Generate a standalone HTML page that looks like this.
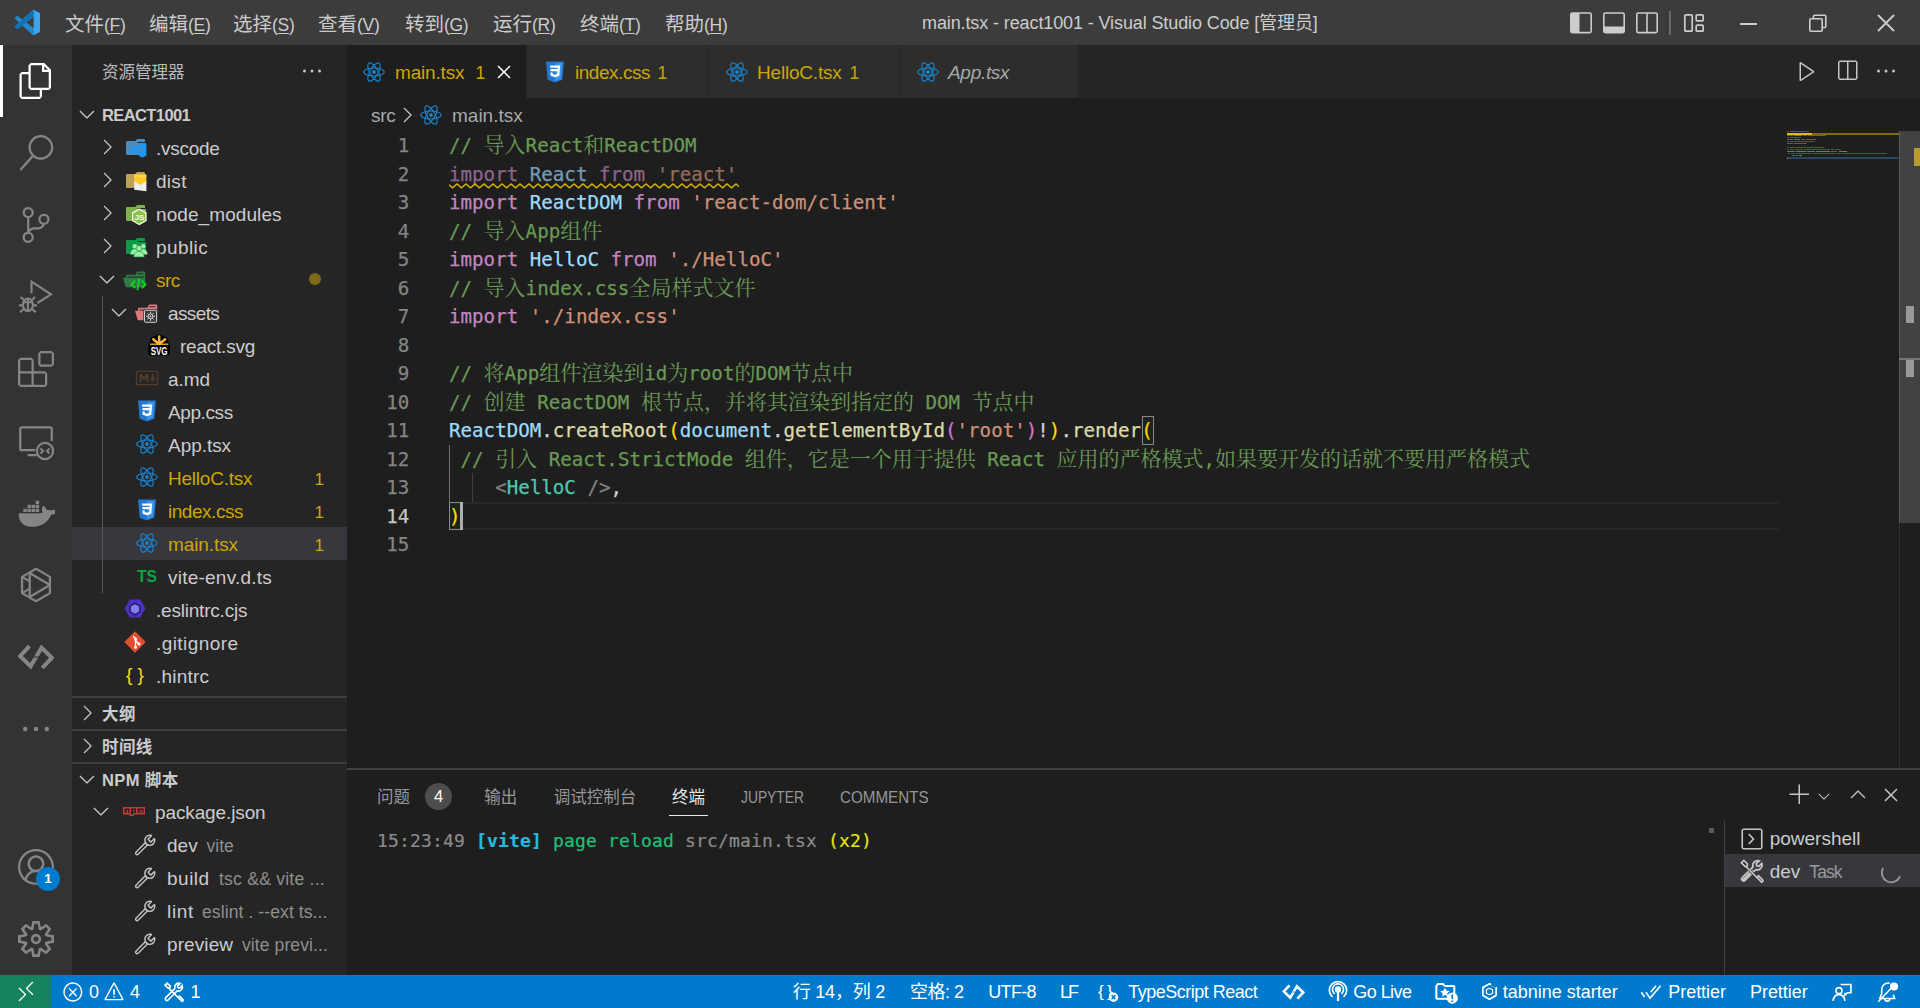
<!DOCTYPE html>
<html lang="zh-CN">
<head>
<meta charset="utf-8">
<title>main.tsx - react1001 - Visual Studio Code</title>
<style>
*{box-sizing:border-box;margin:0;padding:0}
html,body{width:1920px;height:1008px;overflow:hidden;background:#1e1e1e}
body{font-family:"Liberation Sans","Noto Sans CJK SC",sans-serif;font-size:19px;color:#ccc;position:relative}
.abs{position:absolute}
svg{display:block;position:absolute}
/* title bar */
#title{position:absolute;left:0;top:0;width:1920px;height:45px;background:#3c3c3c;color:#ccc}
#title .mi{position:absolute;top:1.5px;height:45px;line-height:44px;font-size:19.5px;white-space:nowrap}
#title .mi .la{font-size:17.5px;letter-spacing:-.3px}
#title .mi u{text-decoration-thickness:1px;text-underline-offset:2px}
#wtitle{position:absolute;top:1.2px;left:922px;height:45px;line-height:44px;font-size:18px;letter-spacing:-.11px;white-space:nowrap;color:#ccc}
/* activity bar */
#act{position:absolute;left:0;top:45px;width:72px;height:930px;background:#333}
/* side bar */
#side{position:absolute;left:72px;top:45px;width:275px;height:930px;background:#252526;overflow:hidden}
.row{position:absolute;left:0;width:275px;height:33px;line-height:32px;white-space:nowrap;font-size:19px;color:#ccc}
.row .lb{position:absolute;top:2.2px}
.row .bd{position:absolute;top:3px;right:23px;font-size:17px}
.warn{color:#cca700}
.hdr{position:absolute;left:0;width:275px;height:33px;line-height:32px;font-weight:bold;font-size:16.5px;color:#ccc;white-space:nowrap}
.hdr .lb{position:absolute;left:30px;top:1px}
.dim{color:#8f8f8f}
/* editor */
#tabs{position:absolute;left:347px;top:45px;width:1573px;height:53px;background:#252526}
.tab{position:absolute;top:0;height:53px;background:#2d2d2d;border-right:1px solid #252526;line-height:52px;font-size:19px;white-space:nowrap}
.tab.act{background:#1e1e1e}
.tab .lb{position:absolute;top:2.1px}
#crumbs{position:absolute;left:347px;top:98px;width:1573px;height:33px;background:#1e1e1e;line-height:32px;font-size:19px;color:#a9a9a9;white-space:nowrap}
#ed{position:absolute;left:347px;top:131px;width:1573px;height:637px;background:#1e1e1e;overflow:hidden}
.ln{-webkit-text-stroke:.25px;position:absolute;left:0;margin-top:1.1px;width:62.4px;text-align:right;height:28.5px;line-height:28.5px;font-family:"DejaVu Sans Mono","Liberation Mono",monospace;font-size:19.17px;color:#858585}
.cl{-webkit-text-stroke:.25px;position:absolute;left:102px;margin-top:1.1px;height:28.5px;line-height:28.5px;font-family:"DejaVu Sans Mono","Liberation Mono","Noto Serif CJK SC",monospace;font-size:19.17px;color:#d4d4d4;white-space:pre}
.cl .z{-webkit-text-stroke:0;font-family:"Noto Serif CJK SC","Noto Sans CJK SC",serif;font-size:21px;line-height:20px}
.c{color:#6a9955}.k{color:#c586c0}.v{color:#9cdcfe}.s{color:#ce9178}.f{color:#dcdcaa}.b1{color:#ffd700}.b2{color:#da70d6}.b3{color:#179fff}.t{color:#4ec9b0}.g{color:#808080}
/* panel */
#panel{position:absolute;left:347px;top:768px;width:1573px;height:207px;background:#1e1e1e;border-top:2px solid #414141}
.pt{position:absolute;top:9.3px;height:36px;line-height:36px;font-size:16.5px;color:#979797;white-space:nowrap}
.term{-webkit-text-stroke:.2px;font-family:"DejaVu Sans Mono","Liberation Mono",monospace;font-size:18px;letter-spacing:0.16px;white-space:pre}
/* status */
#status{position:absolute;left:0;top:975px;width:1920px;height:33px;background:#007acc;color:#fff;font-size:18px;line-height:32px}
#status .si{position:absolute;top:1.2px;height:33px;white-space:nowrap}
</style>
</head>
<body>
<div id="title">
<svg style="left:15px;top:10px" width="25" height="25" viewBox="0 0 100 100"><path fill="#2489ca" d="M96.5 10.8L75.9 0.9a6.2 6.2 0 0 0-7.1 1.2L29.4 38 12.2 25a4.2 4.2 0 0 0-5.3.2L1.4 30.200000000000003a4.2 4.2 0 0 0 0 6.2L16.3 50 1.4 63.6a4.2 4.2 0 0 0 0 6.2l5.5 5a4.2 4.2 0 0 0 5.3.2L29.4 62l39.4 35.9a6.2 6.2 0 0 0 7.1 1.2l20.6-9.9a6.2 6.2 0 0 0 3.5-5.6V16.4a6.2 6.2 0 0 0-3.5-5.6z"/><path fill="#1070b3" d="M96.5 10.8L75.9.9a6.2 6.2 0 0 0-7.1 1.2L1.4 63.6a4.2 4.2 0 0 0 0 6.2l5.500 5a4.200 4.200 0 0 0 5.300.200L93.400 13.400c2.700-2.100 6.600-.100 6.600 3.300v-.300a6.200 6.200 0 0 0-3.500-5.600z" opacity=".9"/><path fill="#3c3c3c" d="M75 27.300L45.100 50 75 72.700z"/><path fill="#3aa6f0" d="M75 .3c-1.500-.400-4.300.200-6.200 1.800 2.300-2.300 6.200-.700 6.200 2.600v90.600c0 3.300-3.900 4.900-6.200 2.600 1.900 1.600 4.700 2.200 6.200 1.800l21.500-10.500a6.200 6.200 0 0 0 3.500-5.600V16.400a6.200 6.200 0 0 0-3.500-5.600z"/></svg>
<div class="mi" style="left:65px">文件<span class="la">(<u>F</u>)</span></div>
<div class="mi" style="left:149px">编辑<span class="la">(<u>E</u>)</span></div>
<div class="mi" style="left:233px">选择<span class="la">(<u>S</u>)</span></div>
<div class="mi" style="left:318px">查看<span class="la">(<u>V</u>)</span></div>
<div class="mi" style="left:405px">转到<span class="la">(<u>G</u>)</span></div>
<div class="mi" style="left:493px">运行<span class="la">(<u>R</u>)</span></div>
<div class="mi" style="left:580px">终端<span class="la">(<u>T</u>)</span></div>
<div class="mi" style="left:665px">帮助<span class="la">(<u>H</u>)</span></div>
<div id="wtitle">main.tsx - react1001 - Visual Studio Code [管理员]</div>
<!-- layout controls -->
<svg style="left:1569px;top:11px" width="24" height="24" viewBox="0 0 24 24" fill="none" stroke="#ccc" stroke-width="1.6"><rect x="1.8" y="2" width="20.4" height="19.6" rx="1.5"/><path d="M1.8 3.5a1.500 1.500 0 0 1 1.500-1.500h7.200v19.600h-7.200a1.500 1.500 0 0 1-1.500-1.500z" fill="#ccc" stroke="none"/></svg>
<svg style="left:1602px;top:11px" width="24" height="24" viewBox="0 0 24 24" fill="none" stroke="#ccc" stroke-width="1.6"><rect x="1.800" y="2" width="20.400" height="19.600" rx="1.500"/><path d="M1.800 15.500h20.400v4.600a1.500 1.500 0 0 1-1.500 1.500h-17.400a1.500 1.500 0 0 1-1.500-1.500z" fill="#ccc" stroke="none"/></svg>
<svg style="left:1635px;top:11px" width="24" height="24" viewBox="0 0 24 24" fill="none" stroke="#ccc" stroke-width="1.600"><rect x="1.800" y="2" width="20.400" height="19.600" rx="1.500"/><path d="M12 2v19.600"/></svg>
<div class="abs" style="left:1669px;top:11px;width:2px;height:24px;background:#6a6a6a"></div>
<svg style="left:1683px;top:12px" width="22" height="22" viewBox="0 0 22 22" fill="none" stroke="#ccc" stroke-width="1.700"><rect x="1.800" y="2.800" width="7.400" height="16.400" rx="1"/><rect x="13.200" y="2.800" width="7" height="6" rx="1"/><rect x="13.200" y="13.200" width="7" height="6" rx="1"/></svg>
<div class="abs" style="left:1740px;top:23px;width:17px;height:2px;background:#ccc"></div>
<svg style="left:1808px;top:13px" width="20" height="20" viewBox="0 0 20 20" fill="none" stroke="#ccc" stroke-width="1.600"><rect x="1.800" y="5.800" width="12.400" height="12.400" rx="1"/><path d="M5.500 5.500V3.200a1 1 0 0 1 1-1h10.300a1 1 0 0 1 1 1v10.300a1 1 0 0 1-1 1h-2.300"/></svg>
<svg style="left:1876px;top:13px" width="20" height="20" viewBox="0 0 20 20" fill="none" stroke="#ccc" stroke-width="1.800"><path d="M2 2l16 16M18 2L2 18"/></svg>
</div>

<div id="act">
<div class="abs" style="left:0;top:0;width:3px;height:72px;background:#fff"></div>
<!-- files -->
<svg style="left:18px;top:18px" width="36" height="36" viewBox="0 0 24 24"><path fill="#fff" d="M17.500 0h-9L7 1.500V6H2.500L1 7.500v15.070L2.500 24h12.070L16 22.570V18h4.700l1.300-1.430V4.500L17.500 0zm0 2.120l2.380 2.380H17.500V2.120zm-3 20.380h-12v-15H7v9.070L8.500 18h6v4.500zm6-6h-12v-15H16V6h4.500v10.500z"/></svg>
<!-- search -->
<svg style="left:18px;top:90px" width="36" height="36" viewBox="0 0 24 24"><path fill="#858585" d="M15.250 0a8.250 8.250 0 0 0-6.180 13.720L1 22.880l1.120 1 8.050-9.120A8.251 8.251 0 1 0 15.250.010V0zm0 15a6.750 6.750 0 1 1 0-13.500 6.750 6.750 0 0 1 0 13.500z"/></svg>
<!-- scm -->
<svg style="left:18px;top:162px" width="36" height="36" viewBox="0 0 24 24"><path fill="#858585" d="M21.007 8.222A3.738 3.738 0 0 0 15.045 5.200a3.737 3.737 0 0 0 1.156 6.583 2.988 2.988 0 0 1-2.668 1.670h-2.990a4.456 4.456 0 0 0-2.989 1.165V7.400a3.737 3.737 0 1 0-1.494 0v9.117a3.776 3.776 0 1 0 1.816.099 2.990 2.990 0 0 1 2.668-1.667h2.990a4.484 4.484 0 0 0 4.223-3.039 3.736 3.736 0 0 0 3.250-3.687zM4.565 3.738a2.242 2.242 0 1 1 4.484 0 2.242 2.242 0 0 1-4.484 0zm4.484 16.441a2.242 2.242 0 1 1-4.484 0 2.242 2.242 0 0 1 4.484 0zm8.221-9.715a2.242 2.242 0 1 1 0-4.485 2.242 2.242 0 0 1 0 4.485z"/></svg>
<!-- debug -->
<svg style="left:18px;top:234px" width="36" height="36" viewBox="0 0 24 24" fill="none" stroke="#858585" stroke-width="1.400"><path d="M9 9.500V1.800l13 8.400-9 5.800"/><ellipse cx="6.600" cy="17.200" rx="3.300" ry="4.200"/><path d="M3.500 15.500H10M6.600 13v8.400M3.300 17.600H.600M3.600 20.200l-2.200 2M9.900 17.600h2.700M9.600 20.200l2.200 2M4 14L1.800 12M9.200 14l2.200-2"/></svg>
<!-- extensions -->
<svg style="left:18px;top:306px" width="36" height="36" viewBox="0 0 24 24"><path fill="#858585" d="M13.500 1.500L15 0h7.500L24 1.500V9l-1.500 1.500H15L13.500 9V1.500zm1.500 0V9h7.500V1.500H15zM0 15V6l1.500-1.500H9L10.500 6v7.500H18l1.500 1.500v7.500L18 24H1.500L0 22.500V15zm9-1.500V6H1.500v7.500H9zM9 15H1.500v7.500H9V15zm1.500 7.500H18V15h-7.500v7.500z"/></svg>
<!-- remote explorer -->
<svg style="left:18px;top:380px" width="36" height="36" viewBox="0 0 24 24" fill="none" stroke="#858585" stroke-width="1.500"><path d="M11.500 16.800H2.500a1 1 0 0 1-1-1V2.500a1 1 0 0 1 1-1h19a1 1 0 0 1 1 1v8.200M6.500 20h6"/><circle cx="18" cy="17.300" r="5.400"/><path stroke-width="1.300" d="M15 15.600l1.700 1.700-1.700 1.700M21 15.600l-1.700 1.700 1.700 1.700"/></svg>
<!-- docker -->
<svg style="left:17px;top:449px" width="38" height="38" viewBox="0 0 24 24"><path fill="#858585" d="M21.200 10.400c-.500-.400-1.700-.500-2.600-.300-.100-.900-.600-1.700-1.500-2.400l-.500-.300-.300.500c-.700 1-.800 2.700-.100 3.800-.300.200-1 .400-1.800.400H1.200c-.300 1.900.2 4.400 1.700 6.100 1.400 1.700 3.500 2.500 6.300 2.500 6 0 10.400-2.800 12.500-7.800.800 0 2.600 0 3.500-1.700l.300-.600-.400-.300c-.700-.400-2.400-.600-3.400-.100zM4 9.300h2.200v2H4zm2.600 0h2.200v2H6.600zm2.600 0h2.200v2H9.200zm2.600 0H14v2h-2.200zM6.600 6.800h2.200v2H6.600zm2.600 0h2.200v2H9.200zm2.600 0H14v2h-2.200zm0-2.500H14v2h-2.200z"/></svg>
<!-- hexagon play -->
<svg style="left:18px;top:522px" width="36" height="36" viewBox="0 0 24 24" fill="none" stroke="#858585" stroke-width="1.500" stroke-linejoin="round"><path d="M12 1.200l9.300 5.400v10.800L12 22.800l-9.300-5.400V6.600z"/><path d="M7.800 4v16M7.800 4l13.500 8-13.500 8M2.700 6.600l5.100 3M2.700 17.400l5.100-3"/></svg>
<!-- code link -->
<svg style="left:18px;top:594px" width="36" height="36" viewBox="0 0 24 24" fill="none" stroke="#858585" stroke-width="2.700" stroke-linejoin="miter"><path d="M7.600 4.700L1.400 11.400l7 6.800 7.300-12.400 6.900 6.700-6.400 6.700"/><path stroke="#333" stroke-width=".700" d="M9 12h6.400"/></svg>
<!-- ellipsis -->
<svg style="left:18px;top:666px" width="36" height="36" viewBox="0 0 24 24" fill="#858585"><circle cx="4.800" cy="12" r="1.500"/><circle cx="12" cy="12" r="1.500"/><circle cx="19.200" cy="12" r="1.500"/></svg>
<!-- account -->
<svg style="left:18px;top:804px" width="36" height="36" viewBox="0 0 16 16"><path fill="#858585" d="M16 7.992C16 3.580 12.416 0 8 0S0 3.580 0 7.992c0 2.430 1.104 4.620 2.832 6.090.016.016.032.016.032.032.144.112.288.224.448.336.080.048.144.111.224.175A7.980 7.980 0 0 0 8.016 16a7.980 7.980 0 0 0 4.480-1.375c.080-.048.144-.111.224-.160.144-.111.304-.223.448-.335.016-.016.032-.016.032-.032 1.696-1.487 2.800-3.676 2.800-6.106zm-8 7.001c-1.504 0-2.880-.480-4.016-1.279.016-.128.048-.255.080-.383a4.170 4.170 0 0 1 .416-.991c.176-.304.384-.576.640-.816.240-.240.528-.463.816-.639.304-.176.624-.304.976-.400A4.150 4.150 0 0 1 8 10.342a4.185 4.185 0 0 1 2.928 1.166c.368.368.656.800.864 1.295.112.288.192.592.240.911A7.030 7.030 0 0 1 8 14.993zm-2.448-7.400a2.490 2.490 0 0 1-.208-1.024c0-.351.064-.703.208-1.023.144-.320.336-.607.576-.847.240-.240.528-.431.848-.575.320-.144.672-.208 1.024-.208.368 0 .704.064 1.024.208.320.144.608.336.848.575.240.240.432.528.576.847.144.320.208.672.208 1.023 0 .368-.064.704-.208 1.023a2.840 2.840 0 0 1-.576.848 2.840 2.840 0 0 1-.848.575 2.715 2.715 0 0 1-2.064 0 2.840 2.840 0 0 1-.848-.575 2.526 2.526 0 0 1-.560-.848zm7.424 5.306c0-.032-.016-.048-.016-.080a5.220 5.220 0 0 0-.688-1.406 4.883 4.883 0 0 0-1.088-1.135 5.207 5.207 0 0 0-1.040-.608 2.820 2.820 0 0 0 .464-.383 4.200 4.200 0 0 0 .624-.784 3.624 3.624 0 0 0 .528-1.934 3.710 3.710 0 0 0-.288-1.470 3.799 3.799 0 0 0-.816-1.199 3.845 3.845 0 0 0-1.200-.800 3.720 3.720 0 0 0-1.472-.287 3.720 3.720 0 0 0-1.472.288 3.631 3.631 0 0 0-1.200.815 3.840 3.840 0 0 0-.800 1.199 3.710 3.710 0 0 0-.288 1.470c0 .352.048.688.144 1.007.096.336.224.640.400.927.160.288.384.544.624.784.144.144.304.271.480.383a5.120 5.120 0 0 0-1.040.624c-.416.320-.784.703-1.088 1.119a4.999 4.999 0 0 0-.688 1.406c-.016.032-.016.064-.016.080C1.776 11.636.992 9.910.992 7.992.992 4.140 4.144.991 8 .991s7.008 3.149 7.008 7.001a6.960 6.960 0 0 1-2.032 4.907z"/></svg>
<div class="abs" style="left:36px;top:822px;width:24px;height:24px;border-radius:12px;background:#007acc;color:#fff;font-size:13.500px;font-weight:bold;line-height:24px;text-align:center">1</div>
<!-- gear -->
<svg style="left:18px;top:876px" width="36" height="36" viewBox="0 0 24 24"><path fill="#858585" fill-rule="evenodd" d="M19.850 8.750l4.150.830v4.840l-4.150.830 2.350 3.520-3.430 3.430-3.520-2.350-.830 4.150H9.580l-.830-4.150-3.520 2.350-3.430-3.430 2.350-3.520L0 14.420V9.580l4.150-.830L1.800 5.230 5.230 1.800l3.520 2.350L9.580 0h4.840l.830 4.150 3.520-2.350 3.430 3.430-2.350 3.520zm-1.570 5.070l4-.810v-2l-4-.810-.540-1.300 2.290-3.430-1.430-1.430-3.430 2.290-1.300-.540-.810-4h-2l-.810 4-1.300.540-3.430-2.290-1.430 1.430L6.380 8.900l-.540 1.300-4 .810v2l4 .810.540 1.300-2.290 3.430 1.430 1.430 3.430-2.290 1.300.540.810 4h2l.810-4 1.300-.540 3.430 2.290 1.430-1.430-2.290-3.430.540-1.300zm-8.186-4.672A3.430 3.430 0 0 1 12 8.570 3.440 3.440 0 0 1 15.430 12a3.430 3.430 0 1 1-5.336-2.852zm.956 4.274c.281.188.612.288.950.288A1.700 1.700 0 0 0 13.710 12a1.710 1.710 0 1 0-2.660 1.422z"/></svg>
</div>

<div id="side">
<div class="abs" style="left:30px;top:0;height:53px;line-height:54px;font-size:16.500px;color:#bbb;white-space:nowrap">资源管理器</div>
<svg style="left:228px;top:14px" width="24" height="24" viewBox="0 0 16 16"><path fill="#c5c5c5" d="M4 8a1 1 0 1 1-2 0 1 1 0 0 1 2 0zm5 0a1 1 0 1 1-2 0 1 1 0 0 1 2 0zm5 0a1 1 0 1 1-2 0 1 1 0 0 1 2 0z"/></svg>
<div class="hdr" style="top:52.5px"><svg style="left:3px;top:4.5px" width="24" height="24" viewBox="0 0 16 16"><path fill="#c5c5c5" d="M7.976 10.072l4.357-4.357.620.618L8.284 11h-.618L3 6.333l.619-.618 4.357 4.357z"/></svg><span class="lb" style="letter-spacing:-0.6px;top:1px">REACT1001</span></div>
<div class="abs" style="left:30px;top:250.5px;width:1px;height:297px;background:#585858"></div>
<div class="row " style="top:85.5px"><svg style="left:23px;top:4.5px" width="24" height="24" viewBox="0 0 16 16"><path fill="#c5c5c5" d="M10.072 8.024L5.715 3.667l.618-.620L11 7.716v.618L6.333 13l-.618-.619 4.357-4.357z"/></svg><svg style="left:52px;top:4.5px;overflow:visible" width="24" height="24" viewBox="0 0 24 24"><path fill="#4a8bc0" d="M2 7.300A1.300 1.300 0 0 1 3.300 6h7.900l1.700-1.700a1 1 0 0 1 .700-.300h6.100A1.300 1.300 0 0 1 21 5.300V7H13.500v1H22v10.700A1.300 1.300 0 0 1 20.700 20H3.300A1.300 1.300 0 0 1 2 18.700z"/><g transform="translate(5.800 7.600) scale(.166 .150)"><path fill="#2196f3" d="M96.500 10.800L75.900.900a6.200 6.200 0 0 0-7.100 1.200L29.400 38 12.200 25a4.200 4.200 0 0 0-5.300.200l-5.500 5a4.200 4.200 0 0 0 0 6.200L16.300 50 1.400 63.600a4.200 4.200 0 0 0 0 6.200l5.500 5a4.200 4.200 0 0 0 5.300.200L29.400 62l39.400 35.900a6.200 6.200 0 0 0 7.100 1.200l20.600-9.900a6.200 6.200 0 0 0 3.500-5.600V16.400a6.200 6.200 0 0 0-3.500-5.600zM75 72.700L45.100 50 75 27.300z"/></g></svg><span class="lb" style="left:84px;letter-spacing:-0.28px">.vscode</span></div>
<div class="row " style="top:118.5px"><svg style="left:23px;top:4.5px" width="24" height="24" viewBox="0 0 16 16"><path fill="#c5c5c5" d="M10.072 8.024L5.715 3.667l.618-.620L11 7.716v.618L6.333 13l-.618-.619 4.357-4.357z"/></svg><svg style="left:52px;top:4.5px;overflow:visible" width="24" height="24" viewBox="0 0 24 24"><path fill="#bfa055" d="M2 7.300A1.300 1.300 0 0 1 3.300 6h7.900l1.700-1.700a1 1 0 0 1 .700-.300h6.100A1.300 1.300 0 0 1 21 5.300V7H13.500v1H22v10.700A1.300 1.300 0 0 1 20.700 20H3.300A1.300 1.300 0 0 1 2 18.700z"/><path fill="#ffca28" d="M10.200 6.600h12.200v8l-6.100 3.600-6.100-3.600z"/><path fill="#ffd95a" d="M10.200 6.600h12.200v2.500H10.200z" opacity=".6"/><path fill="#eeeeee" d="M10.200 13.200l6.100 3.800 6.100-3.800V23.200l-12.200-1.400z"/></svg><span class="lb" style="left:84px;letter-spacing:0.29px">dist</span></div>
<div class="row " style="top:151.5px"><svg style="left:23px;top:4.5px" width="24" height="24" viewBox="0 0 16 16"><path fill="#c5c5c5" d="M10.072 8.024L5.715 3.667l.618-.620L11 7.716v.618L6.333 13l-.618-.619 4.357-4.357z"/></svg><svg style="left:52px;top:4.5px;overflow:visible" width="24" height="24" viewBox="0 0 24 24"><path fill="#7fb24a" d="M2 7.300A1.300 1.300 0 0 1 3.300 6h7.900l1.700-1.700a1 1 0 0 1 .700-.300h6.100A1.300 1.300 0 0 1 21 5.300V7H13.500v1H22v10.700A1.300 1.300 0 0 1 20.700 20H3.300A1.300 1.300 0 0 1 2 18.700z"/><path fill="#8bc34a" stroke="#f1f8e9" stroke-width="1.300" d="M15.300 8.100l6.700 3.850v7.700l-6.700 3.850-6.700-3.850v-7.700z"/><text x="15.400" y="18.700" font-family="Liberation Sans,sans-serif" font-weight="bold" font-size="8" fill="#f1f8e9" text-anchor="middle">JS</text></svg><span class="lb" style="left:84px;letter-spacing:0.08px">node_modules</span></div>
<div class="row " style="top:184.5px"><svg style="left:23px;top:4.5px" width="24" height="24" viewBox="0 0 16 16"><path fill="#c5c5c5" d="M10.072 8.024L5.715 3.667l.618-.620L11 7.716v.618L6.333 13l-.618-.619 4.357-4.357z"/></svg><svg style="left:52px;top:4.5px;overflow:visible" width="24" height="24" viewBox="0 0 24 24"><path fill="#0e9a47" d="M2 7.300A1.300 1.300 0 0 1 3.300 6h7.900l1.700-1.700a1 1 0 0 1 .700-.300h6.100A1.300 1.300 0 0 1 21 5.300V7H13.500v1H22v10.700A1.300 1.300 0 0 1 20.700 20H3.300A1.300 1.300 0 0 1 2 18.700z"/><g fill="#9df0a3"><circle cx="10.800" cy="12.300" r="2.300"/><circle cx="19.200" cy="12.300" r="2.300"/><path d="M6.500 20.500c0-3.300 1.900-5.200 4.300-5.200s4.300 1.900 4.300 5.200zM14.900 20.500c0-3.300 1.900-5.200 4.300-5.200s4.300 1.900 4.300 5.200z"/><circle cx="15" cy="14.300" r="2.800" stroke="#0e9a47" stroke-width=".600"/><path stroke="#0e9a47" stroke-width=".600" d="M9.800 22.900c0-3.600 2.300-5.500 5.200-5.500s5.200 1.900 5.200 5.500z"/></g></svg><span class="lb" style="left:84px;letter-spacing:0.42px">public</span></div>
<div class="row warn" style="top:217.5px"><svg style="left:23px;top:4.5px" width="24" height="24" viewBox="0 0 16 16"><path fill="#c5c5c5" d="M7.976 10.072l4.357-4.357.620.618L8.284 11h-.618L3 6.333l.619-.618 4.357 4.357z"/></svg><svg style="left:52px;top:5.3px;overflow:visible" width="24" height="24" viewBox="0 0 24 24"><path fill="#2f7c45" d="M2 7.700a1 1 0 0 1 1-1h8.300l1.500-2.600a1 1 0 0 1 .800-.500h6.600a1 1 0 0 1 1 1V10.500H2z"/><path fill="#252526" d="M13.200 5.300h6.300v.900h-6.300z"/><path fill="#252526" d="M3.200 8.600h17v1.100h-17z"/><path fill="#2f7c45" d="M-1 9.700h22.200V18.200a1 1 0 0 1-1 1H2.500a1 1 0 0 1-1-.700z"/><g fill="none" stroke="#12d622" stroke-width="1.800"><path d="M11.200 12.600L7.400 16.400l3.800 3.800M17.800 12.600l3.800 3.800-3.800 3.800M15.300 10.700l-1.900 11.500"/></g></svg><span class="lb" style="left:84px;letter-spacing:-0.51px">src</span><div class="abs" style="left:237px;top:10.500px;width:12px;height:12px;border-radius:6px;background:#7d6a14"></div></div>
<div class="row " style="top:250.5px"><svg style="left:35px;top:4.5px" width="24" height="24" viewBox="0 0 16 16"><path fill="#c5c5c5" d="M7.976 10.072l4.357-4.357.620.618L8.284 11h-.618L3 6.333l.619-.618 4.357 4.357z"/></svg><svg style="left:64px;top:5.3px;overflow:visible" width="24" height="24" viewBox="0 0 24 24"><path fill="#dc7a7c" d="M2 7.700a1 1 0 0 1 1-1h8.300l1.500-2.600a1 1 0 0 1 .800-.500h6.600a1 1 0 0 1 1 1V10.500H2z"/><path fill="#252526" d="M13.200 5.300h6.300v.900h-6.300z"/><path fill="#252526" d="M3.200 8.600h17v1.100h-17z"/><path fill="#dc7a7c" d="M-1 9.700h22.200V18.200a1 1 0 0 1-1 1H2.500a1 1 0 0 1-1-.700z"/><rect x="7.400" y="8.200" width="14.300" height="14.200" rx="1.600" fill="#2b2b2b"/><rect x="8.500" y="9.300" width="12.100" height="12" rx=".800" fill="#3a3a3a" stroke="#cfcfcf" stroke-width="1"/><g fill="none" stroke="#d5d5d5" stroke-width="1"><circle cx="14.550" cy="15.300" r="2.300"/><circle cx="14.550" cy="15.300" r=".500"/><path d="M14.550 10.800v2.200M14.550 17.600v2.200M10.050 15.300h2.200M16.850 15.300h2.200M11.400 12.150l1.500 1.500M16.200 16.950l1.500 1.500M17.700 12.150l-1.500 1.500M12.900 16.950l-1.500 1.500"/></g></svg><span class="lb" style="left:96px;letter-spacing:-0.62px">assets</span></div>
<div class="row " style="top:283.5px"><svg style="left:75px;top:4.5px" width="24" height="24" viewBox="0 0 24 24"><path fill="#000" d="M3.300 10h17.600a2 2 0 0 1 2 2v8.500a2 2 0 0 1-2 2H3.300a2 2 0 0 1-2-2V12a2 2 0 0 1 2-2z"/><path fill="#000" d="M2.200 11.500L4.300 4.200 8.500 2.800 12.200 1.200l3.700 1.600 4.300 1.600 2 7.100z"/><g stroke="#ffb13b" stroke-width="2.500" stroke-linecap="round"><path d="M12.200 3.600v6.800M6.300 6.200l5.300 4.600M18.100 6.300l-5.300 4.500"/></g><path stroke="#ffb13b" stroke-width="1.300" d="M3 11.200h18.400"/><text x="12.100" y="21.700" font-family="Liberation Sans,sans-serif" font-weight="bold" font-size="11.300" fill="#fff" text-anchor="middle" textLength="16.800" lengthAdjust="spacingAndGlyphs">SVG</text></svg><span class="lb" style="left:108px;letter-spacing:-0.23px">react.svg</span></div>
<div class="row " style="top:316.5px"><svg style="left:63px;top:4.5px" width="24" height="24" viewBox="0 0 24 24"><rect x="1.500" y="5.300" width="21" height="13.400" rx="1.200" fill="none" stroke="#503d2c" stroke-width="1.300"/><path fill="#503d2c" d="M4.500 16V8h2.200l2.300 3 2.300-3h2.200v8h-2.200v-4.600L9 14.400l-2.300-3V16zM17.800 16l-3.200-3.800h2.100V8h2.200v4.200H21z"/></svg><span class="lb" style="left:96px;letter-spacing:-0.09px">a.md</span></div>
<div class="row " style="top:349.5px"><svg style="left:63px;top:4.5px" width="24" height="24" viewBox="0 0 24 24"><path fill="#2277d0" d="M3 1.500h18l-1.700 18.300L12 22.500l-7.300-2.700z"/><path fill="#3a95ea" d="M12 3v17.900l5.900-2.100L19.300 3z"/><path fill="#fff" d="M7 5.500h10.200l-.9 10.300-4.300 1.500-4.300-1.500-.300-3.200h2.300l.100 1.500 2.200.700 2.200-.700.300-2.900H7.600L7.400 9h7.300l.100-1.300H7.200z"/></svg><span class="lb" style="left:96px;letter-spacing:-0.41px">App.css</span></div>
<div class="row " style="top:382.5px"><svg style="left:63px;top:4.5px" width="24" height="24" viewBox="0 0 24 24" fill="none" stroke="#1a84d0" stroke-width="1.150"><ellipse cx="12" cy="12" rx="10.300" ry="4"/><ellipse cx="12" cy="12" rx="10.300" ry="4" transform="rotate(60 12 12)"/><ellipse cx="12" cy="12" rx="10.300" ry="4" transform="rotate(120 12 12)"/><circle cx="12" cy="12" r="1.900" fill="#1a84d0" stroke="none"/></svg><span class="lb" style="left:96px;letter-spacing:-0.04px">App.tsx</span></div>
<div class="row warn" style="top:415.5px"><svg style="left:63px;top:4.5px" width="24" height="24" viewBox="0 0 24 24" fill="none" stroke="#1a84d0" stroke-width="1.150"><ellipse cx="12" cy="12" rx="10.300" ry="4"/><ellipse cx="12" cy="12" rx="10.300" ry="4" transform="rotate(60 12 12)"/><ellipse cx="12" cy="12" rx="10.300" ry="4" transform="rotate(120 12 12)"/><circle cx="12" cy="12" r="1.900" fill="#1a84d0" stroke="none"/></svg><span class="lb" style="left:96px;letter-spacing:-0.23px">HelloC.tsx</span><span class="bd">1</span></div>
<div class="row warn" style="top:448.5px"><svg style="left:63px;top:4.5px" width="24" height="24" viewBox="0 0 24 24"><path fill="#2277d0" d="M3 1.500h18l-1.700 18.300L12 22.500l-7.300-2.700z"/><path fill="#3a95ea" d="M12 3v17.900l5.900-2.100L19.300 3z"/><path fill="#fff" d="M7 5.500h10.200l-.9 10.300-4.300 1.500-4.300-1.500-.300-3.200h2.300l.100 1.500 2.200.700 2.200-.700.300-2.900H7.600L7.400 9h7.300l.100-1.300H7.200z"/></svg><span class="lb" style="left:96px;letter-spacing:-0.47px">index.css</span><span class="bd">1</span></div>
<div class="row warn" style="top:481.5px;background:#37373d"><div class="abs" style="left:30px;top:0;width:1px;height:33px;background:#585858"></div><svg style="left:63px;top:4.5px" width="24" height="24" viewBox="0 0 24 24" fill="none" stroke="#1a84d0" stroke-width="1.150"><ellipse cx="12" cy="12" rx="10.300" ry="4"/><ellipse cx="12" cy="12" rx="10.300" ry="4" transform="rotate(60 12 12)"/><ellipse cx="12" cy="12" rx="10.300" ry="4" transform="rotate(120 12 12)"/><circle cx="12" cy="12" r="1.900" fill="#1a84d0" stroke="none"/></svg><span class="lb" style="left:96px;letter-spacing:-0.09px">main.tsx</span><span class="bd">1</span></div>
<div class="row " style="top:514.5px"><svg style="left:63px;top:4.5px" width="24" height="24" viewBox="0 0 24 24"><text x="12" y="18" font-family="Liberation Sans,sans-serif" font-weight="bold" font-size="16" fill="#10a43e" text-anchor="middle" textLength="20" lengthAdjust="spacingAndGlyphs">TS</text></svg><span class="lb" style="left:96px;letter-spacing:0.23px">vite-env.d.ts</span></div>
<div class="row " style="top:547.5px"><svg style="left:51px;top:4.5px" width="24" height="24" viewBox="0 0 24 24"><path fill="#4b32c3" d="M6.800 2.600h10.400l5.200 9-5.200 9H6.800l-5.200-9z"/><path fill="#8080f2" stroke="#2b1d6e" stroke-width="1.600" d="M12 6.300l4.900 2.850v5.700L12 17.700l-4.900-2.850v-5.700z"/></svg><span class="lb" style="left:84px;letter-spacing:-0.21px">.eslintrc.cjs</span></div>
<div class="row " style="top:580.5px"><svg style="left:51px;top:4.5px" width="24" height="24" viewBox="0 0 24 24"><path fill="#e44d31" d="M12 1.300l10.700 10.700L12 22.700 1.300 12z"/><g fill="none" stroke="#fff" stroke-width="1.400"><path d="M10 6l2.500 2.500V18M12.500 10.500l3.200 3.200"/></g><g fill="#fff"><circle cx="12.500" cy="9" r="1.500"/><circle cx="12.500" cy="17.300" r="1.500"/><circle cx="16" cy="14" r="1.500"/></g></svg><span class="lb" style="left:84px;letter-spacing:0.43px">.gitignore</span></div>
<div class="row " style="top:613.5px"><svg style="left:51px;top:4.5px" width="24" height="24" viewBox="0 0 24 24"><text x="12" y="18" font-family="Liberation Sans,sans-serif" font-size="19" fill="#f5de19" text-anchor="middle">{ }</text></svg><span class="lb" style="left:84px;letter-spacing:0.21px">.hintrc</span></div>
<div class="abs" style="left:0;top:651px;width:275px;height:1.500px;background:#3f3f41"></div><div class="hdr" style="top:651px"><svg style="left:3px;top:4.5px" width="24" height="24" viewBox="0 0 16 16"><path fill="#c5c5c5" d="M10.072 8.024L5.715 3.667l.618-.620L11 7.716v.618L6.333 13l-.618-.619 4.357-4.357z"/></svg><span class="lb" style="letter-spacing:0.4px;top:2.3px">大纲</span></div>
<div class="abs" style="left:0;top:684px;width:275px;height:1.500px;background:#3f3f41"></div><div class="hdr" style="top:684px"><svg style="left:3px;top:4.5px" width="24" height="24" viewBox="0 0 16 16"><path fill="#c5c5c5" d="M10.072 8.024L5.715 3.667l.618-.620L11 7.716v.618L6.333 13l-.618-.619 4.357-4.357z"/></svg><span class="lb" style="letter-spacing:0.4px;top:2.3px">时间线</span></div>
<div class="abs" style="left:0;top:717px;width:275px;height:1.500px;background:#3f3f41"></div><div class="hdr" style="top:717px"><svg style="left:3px;top:4.5px" width="24" height="24" viewBox="0 0 16 16"><path fill="#c5c5c5" d="M7.976 10.072l4.357-4.357.620.618L8.284 11h-.618L3 6.333l.619-.618 4.357 4.357z"/></svg><span class="lb" style="letter-spacing:0.4px;top:2.3px">NPM 脚本</span></div>
<div class="row" style="top:749.5px"><svg style="left:17px;top:4.5px" width="24" height="24" viewBox="0 0 16 16"><path fill="#c5c5c5" d="M7.976 10.072l4.357-4.357.620.618L8.284 11h-.618L3 6.333l.619-.618 4.357 4.357z"/></svg><svg style="left:50px;top:4.5px" width="24" height="24" viewBox="0 0 24 24"><path fill="#cb3837" d="M1 8h22v7.500H12V17H7.500v-1.500H1z"/><path fill="#252526" d="M2.500 9.500v4.500h2.200v-3h1.400v3h1.400V9.500zM9 9.500v6h2.200V14h2.800V9.500zm2.200 1.500h1.400v1.500h-1.400zM15.500 9.500v4.500h2.200v-3h1v3h1v-3h1v3h1V9.500z"/></svg><span class="lb" style="left:83px;letter-spacing:-.12px">package.json</span></div>
<div class="row" style="top:782.5px"><svg style="left:61px;top:5.5px" width="24" height="24" viewBox="0 0 16 16"><path fill="#c5c5c5" d="M14.773 3.485l-.780-.184-2.108 2.096-1.194-1.216 2.056-2.157-.180-.792a4.420 4.420 0 0 0-1.347-.228 3.640 3.640 0 0 0-1.457.280 3.824 3.824 0 0 0-1.186.840 3.736 3.736 0 0 0-.875 1.265 3.938 3.938 0 0 0 0 2.966 335.341 335.341 0 0 0-6.173 6.234c-.210.275-.310.618-.284.963a1.403 1.403 0 0 0 .464.967c.124.135.272.247.437.328.170.075.353.118.538.127.316-.006.619-.126.854-.337 1.548-1.457 4.514-4.450 6.199-6.204.457.194.948.294 1.444.293a3.736 3.736 0 0 0 2.677-1.133 3.885 3.885 0 0 0 1.111-2.730 4.211 4.211 0 0 0-.196-1.378zM2.933 13.928a.310.310 0 0 1-.135.070.437.437 0 0 1-.149 0 .346.346 0 0 1-.144-.057.336.336 0 0 1-.114-.110c-.140-.143-.271-.415-.140-.568 1.370-1.457 4.191-4.305 5.955-6.046.100.132.210.258.328.376.118.123.245.237.380.341-1.706 1.750-4.488 4.564-5.980 5.994zm11.118-9.065c.002.765-.296 1.500-.832 2.048a2.861 2.861 0 0 1-4.007 0 2.992 2.992 0 0 1-.635-3.137A2.748 2.748 0 0 1 10.140 2.180a2.760 2.760 0 0 1 1.072-.214h.254L9.649 3.839v.696l1.895 1.886h.660l1.847-1.816v.258z"/></svg><span class="lb" style="left:95px;letter-spacing:0px">dev</span><span class="lb dim" style="left:134.5px;font-size:17.500px;letter-spacing:0px">vite</span></div>
<div class="row" style="top:815.5px"><svg style="left:61px;top:5.5px" width="24" height="24" viewBox="0 0 16 16"><path fill="#c5c5c5" d="M14.773 3.485l-.780-.184-2.108 2.096-1.194-1.216 2.056-2.157-.180-.792a4.420 4.420 0 0 0-1.347-.228 3.640 3.640 0 0 0-1.457.280 3.824 3.824 0 0 0-1.186.840 3.736 3.736 0 0 0-.875 1.265 3.938 3.938 0 0 0 0 2.966 335.341 335.341 0 0 0-6.173 6.234c-.210.275-.310.618-.284.963a1.403 1.403 0 0 0 .464.967c.124.135.272.247.437.328.170.075.353.118.538.127.316-.006.619-.126.854-.337 1.548-1.457 4.514-4.450 6.199-6.204.457.194.948.294 1.444.293a3.736 3.736 0 0 0 2.677-1.133 3.885 3.885 0 0 0 1.111-2.730 4.211 4.211 0 0 0-.196-1.378zM2.933 13.928a.310.310 0 0 1-.135.070.437.437 0 0 1-.149 0 .346.346 0 0 1-.144-.057.336.336 0 0 1-.114-.110c-.140-.143-.271-.415-.140-.568 1.370-1.457 4.191-4.305 5.955-6.046.100.132.210.258.328.376.118.123.245.237.380.341-1.706 1.750-4.488 4.564-5.980 5.994zm11.118-9.065c.002.765-.296 1.500-.832 2.048a2.861 2.861 0 0 1-4.007 0 2.992 2.992 0 0 1-.635-3.137A2.748 2.748 0 0 1 10.140 2.180a2.760 2.760 0 0 1 1.072-.214h.254L9.649 3.839v.696l1.895 1.886h.660l1.847-1.816v.258z"/></svg><span class="lb" style="left:95px;letter-spacing:0.5px">build</span><span class="lb dim" style="left:147px;font-size:17.500px;letter-spacing:0.25px">tsc &amp;&amp; vite ...</span></div>
<div class="row" style="top:848.5px"><svg style="left:61px;top:5.5px" width="24" height="24" viewBox="0 0 16 16"><path fill="#c5c5c5" d="M14.773 3.485l-.780-.184-2.108 2.096-1.194-1.216 2.056-2.157-.180-.792a4.420 4.420 0 0 0-1.347-.228 3.640 3.640 0 0 0-1.457.280 3.824 3.824 0 0 0-1.186.840 3.736 3.736 0 0 0-.875 1.265 3.938 3.938 0 0 0 0 2.966 335.341 335.341 0 0 0-6.173 6.234c-.210.275-.310.618-.284.963a1.403 1.403 0 0 0 .464.967c.124.135.272.247.437.328.170.075.353.118.538.127.316-.006.619-.126.854-.337 1.548-1.457 4.514-4.450 6.199-6.204.457.194.948.294 1.444.293a3.736 3.736 0 0 0 2.677-1.133 3.885 3.885 0 0 0 1.111-2.730 4.211 4.211 0 0 0-.196-1.378zM2.933 13.928a.310.310 0 0 1-.135.070.437.437 0 0 1-.149 0 .346.346 0 0 1-.144-.057.336.336 0 0 1-.114-.110c-.140-.143-.271-.415-.140-.568 1.370-1.457 4.191-4.305 5.955-6.046.100.132.210.258.328.376.118.123.245.237.380.341-1.706 1.750-4.488 4.564-5.980 5.994zm11.118-9.065c.002.765-.296 1.500-.832 2.048a2.861 2.861 0 0 1-4.007 0 2.992 2.992 0 0 1-.635-3.137A2.748 2.748 0 0 1 10.140 2.180a2.760 2.760 0 0 1 1.072-.214h.254L9.649 3.839v.696l1.895 1.886h.660l1.847-1.816v.258z"/></svg><span class="lb" style="left:95px;letter-spacing:0.7px">lint</span><span class="lb dim" style="left:130px;font-size:17.500px;letter-spacing:0.1px">eslint . --ext ts...</span></div>
<div class="row" style="top:881.5px"><svg style="left:61px;top:5.5px" width="24" height="24" viewBox="0 0 16 16"><path fill="#c5c5c5" d="M14.773 3.485l-.780-.184-2.108 2.096-1.194-1.216 2.056-2.157-.180-.792a4.420 4.420 0 0 0-1.347-.228 3.640 3.640 0 0 0-1.457.280 3.824 3.824 0 0 0-1.186.840 3.736 3.736 0 0 0-.875 1.265 3.938 3.938 0 0 0 0 2.966 335.341 335.341 0 0 0-6.173 6.234c-.210.275-.310.618-.284.963a1.403 1.403 0 0 0 .464.967c.124.135.272.247.437.328.170.075.353.118.538.127.316-.006.619-.126.854-.337 1.548-1.457 4.514-4.450 6.199-6.204.457.194.948.294 1.444.293a3.736 3.736 0 0 0 2.677-1.133 3.885 3.885 0 0 0 1.111-2.730 4.211 4.211 0 0 0-.196-1.378zM2.933 13.928a.310.310 0 0 1-.135.070.437.437 0 0 1-.149 0 .346.346 0 0 1-.144-.057.336.336 0 0 1-.114-.110c-.140-.143-.271-.415-.140-.568 1.370-1.457 4.191-4.305 5.955-6.046.100.132.210.258.328.376.118.123.245.237.380.341-1.706 1.750-4.488 4.564-5.980 5.994zm11.118-9.065c.002.765-.296 1.500-.832 2.048a2.861 2.861 0 0 1-4.007 0 2.992 2.992 0 0 1-.635-3.137A2.748 2.748 0 0 1 10.140 2.180a2.760 2.760 0 0 1 1.072-.214h.254L9.649 3.839v.696l1.895 1.886h.660l1.847-1.816v.258z"/></svg><span class="lb" style="left:95px;letter-spacing:0.1px">preview</span><span class="lb dim" style="left:170px;font-size:17.500px;letter-spacing:0.1px">vite previ...</span></div>
</div>

<div id="tabs">
<div class="tab act" style="left:0px;width:180px"><svg style="left:15px;top:14.5px" width="24" height="24" viewBox="0 0 24 24" fill="none" stroke="#1a84d0" stroke-width="1.150"><ellipse cx="12" cy="12" rx="10.300" ry="4"/><ellipse cx="12" cy="12" rx="10.300" ry="4" transform="rotate(60 12 12)"/><ellipse cx="12" cy="12" rx="10.300" ry="4" transform="rotate(120 12 12)"/><circle cx="12" cy="12" r="1.900" fill="#1a84d0" stroke="none"/></svg><span class="lb warn" style="left:48px;letter-spacing:-.18px">main.tsx</span><span class="lb warn" style="left:128.5px;font-size:17.500px">1</span><svg style="left:145px;top:14.5px" width="24" height="24" viewBox="0 0 16 16"><path fill="#fff" d="M8 8.707l3.646 3.647.708-.707L8.707 8l3.647-3.646-.707-.708L8 7.293 4.354 3.646l-.707.708L7.293 8l-3.646 3.646.707.708L8 8.707z"/></svg></div>
<div class="tab " style="left:180px;width:182px"><svg style="left:16px;top:14.5px" width="24" height="24" viewBox="0 0 24 24"><path fill="#2277d0" d="M3 1.500h18l-1.700 18.300L12 22.500l-7.300-2.700z"/><path fill="#3a95ea" d="M12 3v17.900l5.900-2.100L19.300 3z"/><path fill="#fff" d="M7 5.500h10.200l-.9 10.300-4.300 1.500-4.300-1.500-.300-3.200h2.300l.100 1.500 2.200.700 2.200-.700.300-2.900H7.600L7.400 9h7.300l.100-1.300H7.200z"/></svg><span class="lb warn" style="left:48px;letter-spacing:-.47px">index.css</span><span class="lb warn" style="left:130.5px;font-size:17.500px">1</span></div>
<div class="tab " style="left:362px;width:191px"><svg style="left:16px;top:14.5px" width="24" height="24" viewBox="0 0 24 24" fill="none" stroke="#1a84d0" stroke-width="1.150"><ellipse cx="12" cy="12" rx="10.300" ry="4"/><ellipse cx="12" cy="12" rx="10.300" ry="4" transform="rotate(60 12 12)"/><ellipse cx="12" cy="12" rx="10.300" ry="4" transform="rotate(120 12 12)"/><circle cx="12" cy="12" r="1.900" fill="#1a84d0" stroke="none"/></svg><span class="lb warn" style="left:48px;letter-spacing:-.2px">HelloC.tsx</span><span class="lb warn" style="left:140.5px;font-size:17.500px">1</span></div>
<div class="tab " style="left:553px;width:179px"><svg style="left:16px;top:14.5px" width="24" height="24" viewBox="0 0 24 24" fill="none" stroke="#1a84d0" stroke-width="1.150"><ellipse cx="12" cy="12" rx="10.300" ry="4"/><ellipse cx="12" cy="12" rx="10.300" ry="4" transform="rotate(60 12 12)"/><ellipse cx="12" cy="12" rx="10.300" ry="4" transform="rotate(120 12 12)"/><circle cx="12" cy="12" r="1.900" fill="#1a84d0" stroke="none"/></svg><span class="lb " style="left:48px;font-style:italic;color:#a8a8a8;letter-spacing:-.3px">App.tsx</span></div>
<svg style="left:1448px;top:14px" width="24" height="24" viewBox="0 0 16 16"><path fill="#c5c5c5" d="M3.780 2L3 2.410v12l.780.420 9-6V8l-9-6zM4 13.480V3.350l7.600 5.070L4 13.480z"/></svg>
<svg style="left:1488px;top:14px" width="24" height="24" viewBox="0 0 16 16"><path fill="#c5c5c5" d="M14 1H3L2 2v11l1 1h11l1-1V2l-1-1zM8 13H3V2h5v11zm6 0H9V2h5v11z"/></svg>
<svg style="left:1527px;top:14px" width="24" height="24" viewBox="0 0 16 16"><path fill="#c5c5c5" d="M4 8a1 1 0 1 1-2 0 1 1 0 0 1 2 0zm5 0a1 1 0 1 1-2 0 1 1 0 0 1 2 0zm5 0a1 1 0 1 1-2 0 1 1 0 0 1 2 0z"/></svg>
</div>
<div id="crumbs"><span class="abs" style="left:24px;top:1.800px;letter-spacing:-.3px">src</span><svg style="left:48px;top:5px" width="24" height="24" viewBox="0 0 16 16"><path fill="#c5c5c5" d="M10.072 8.024L5.715 3.667l.618-.620L11 7.716v.618L6.333 13l-.618-.619 4.357-4.357z"/></svg><svg style="left:72px;top:5px" width="24" height="24" viewBox="0 0 24 24" fill="none" stroke="#1a84d0" stroke-width="1.150"><ellipse cx="12" cy="12" rx="10.300" ry="4"/><ellipse cx="12" cy="12" rx="10.300" ry="4" transform="rotate(60 12 12)"/><ellipse cx="12" cy="12" rx="10.300" ry="4" transform="rotate(120 12 12)"/><circle cx="12" cy="12" r="1.900" fill="#1a84d0" stroke="none"/></svg><span class="abs" style="left:105px;top:1.800px">main.tsx</span></div>

<div id="ed">
<div class="abs" style="left:102px;top:370.5px;width:1329px;height:28.500px;border-top:2px solid #282828;border-bottom:2px solid #282828"></div>
<div class="abs" style="left:102px;top:313.5px;width:1px;height:57px;background:#6e6e6e"></div>
<div class="abs" style="left:125px;top:342.0px;width:1px;height:28.500px;background:#404040"></div>
<div class="abs" style="left:794.9px;top:285.0px;width:12.500px;height:28.500px;border:1.500px solid #888;background:rgba(0,100,0,.1)"></div>
<div class="abs" style="left:101.5px;top:370.5px;width:12.500px;height:28.500px;border:1.500px solid #888;background:rgba(0,100,0,.1)"></div>
<div class="ln" style="top:0.0px">1</div><div class="cl" style="top:0.0px"><span class="c">// <span class="z">导入</span>React<span class="z">和</span>ReactDOM</span></div>
<div class="ln" style="top:28.5px">2</div><div class="cl" style="top:28.5px"><span style="opacity:.67"><span class="k">import</span> <span class="v">React</span> <span class="k">from</span> <span class="s">'react'</span></span></div>
<div class="ln" style="top:57.0px">3</div><div class="cl" style="top:57.0px"><span class="k">import</span> <span class="v">ReactDOM</span> <span class="k">from</span> <span class="s">'react-dom/client'</span></div>
<div class="ln" style="top:85.5px">4</div><div class="cl" style="top:85.5px"><span class="c">// <span class="z">导入</span>App<span class="z">组件</span></span></div>
<div class="ln" style="top:114.0px">5</div><div class="cl" style="top:114.0px"><span class="k">import</span> <span class="v">HelloC</span> <span class="k">from</span> <span class="s">'./HelloC'</span></div>
<div class="ln" style="top:142.5px">6</div><div class="cl" style="top:142.5px"><span class="c">// <span class="z">导入</span>index.css<span class="z">全局样式文件</span></span></div>
<div class="ln" style="top:171.0px">7</div><div class="cl" style="top:171.0px"><span class="k">import</span> <span class="s">'./index.css'</span></div>
<div class="ln" style="top:199.5px">8</div><div class="cl" style="top:199.5px"></div>
<div class="ln" style="top:228.0px">9</div><div class="cl" style="top:228.0px"><span class="c">// <span class="z">将</span>App<span class="z">组件渲染到</span>id<span class="z">为</span>root<span class="z">的</span>DOM<span class="z">节点中</span></span></div>
<div class="ln" style="top:256.5px">10</div><div class="cl" style="top:256.5px"><span class="c">// <span class="z">创建</span> ReactDOM <span class="z">根节点，并将其渲染到指定的</span> DOM <span class="z">节点中</span></span></div>
<div class="ln" style="top:285.0px">11</div><div class="cl" style="top:285.0px"><span class="v">ReactDOM</span>.<span class="f">createRoot</span><span class="b1">(</span><span class="v">document</span>.<span class="f">getElementById</span><span class="b2">(</span><span class="s">'root'</span><span class="b2">)</span>!<span class="b1">)</span>.<span class="f">render</span><span class="b1">(</span></div>
<div class="ln" style="top:313.5px">12</div><div class="cl" style="top:313.5px"> <span class="c">// <span class="z">引入</span> React.StrictMode <span class="z">组件，它是一个用于提供</span> React <span class="z">应用的严格模式</span>,<span class="z">如果要开发的话就不要用严格模式</span></span></div>
<div class="ln" style="top:342.0px">13</div><div class="cl" style="top:342.0px">    <span class="g">&lt;</span><span class="t">HelloC</span> <span class="g">/&gt;</span>,</div>
<div class="ln" style="top:370.5px;color:#c6c6c6">14</div><div class="cl" style="top:370.5px"><span class="b1">)</span></div>
<div class="ln" style="top:399.0px">15</div><div class="cl" style="top:399.0px"></div>
<svg style="left:102px;top:52px" width="290" height="7" viewBox="0 0 290 7"><path fill="none" stroke="#d9b300" stroke-width="1.450" d="M-1.0 1.0 L3.5 4.9 L8.0 1.0 L12.5 4.9 L17.0 1.0 L21.5 4.9 L26.0 1.0 L30.5 4.9 L35.0 1.0 L39.5 4.9 L44.0 1.0 L48.5 4.9 L53.0 1.0 L57.5 4.9 L62.0 1.0 L66.5 4.9 L71.0 1.0 L75.5 4.9 L80.0 1.0 L84.5 4.9 L89.0 1.0 L93.5 4.9 L98.0 1.0 L102.5 4.9 L107.0 1.0 L111.5 4.9 L116.0 1.0 L120.5 4.9 L125.0 1.0 L129.5 4.9 L134.0 1.0 L138.5 4.9 L143.0 1.0 L147.5 4.9 L152.0 1.0 L156.5 4.9 L161.0 1.0 L165.5 4.9 L170.0 1.0 L174.5 4.9 L179.0 1.0 L183.5 4.9 L188.0 1.0 L192.5 4.9 L197.0 1.0 L201.5 4.9 L206.0 1.0 L210.5 4.9 L215.0 1.0 L219.5 4.9 L224.0 1.0 L228.5 4.9 L233.0 1.0 L237.5 4.9 L242.0 1.0 L246.5 4.9 L251.0 1.0 L255.5 4.9 L260.0 1.0 L264.5 4.9 L269.0 1.0 L273.5 4.9 L278.0 1.0 L282.5 4.9 L287.0 1.0 L291.5 4.9"/></svg>
<div class="abs" style="left:112.53999999999999px;top:370.5px;width:3px;height:28.500px;background:#aeafad"></div>
<div class="abs" style="left:1440px;top:2px;width:112px;height:2px;background:#806b0e"></div>
<div class="abs" style="left:1440px;top:2px;width:25px;height:2px;background:#e3bb08"></div>
<div class="abs" style="left:1440px;top:26px;width:112px;height:2px;background:#294865"></div>
<div class="abs" style="left:1440px;top:26.500px;width:1px;height:1px;background:#9a9a40"></div>
<div class="abs" style="left:1440px;top:0.3px;width:2px;height:1.200px;background:#5d8749;opacity:.6"></div>
<div class="abs" style="left:1443px;top:0.3px;width:19px;height:1.200px;background:#5d8749;opacity:.6"></div>
<div class="abs" style="left:1440px;top:4.3px;width:6px;height:1.200px;background:#a571a1;opacity:.6"></div>
<div class="abs" style="left:1447px;top:4.3px;width:8px;height:1.200px;background:#84b8d6;opacity:.6"></div>
<div class="abs" style="left:1456px;top:4.3px;width:4px;height:1.200px;background:#a571a1;opacity:.6"></div>
<div class="abs" style="left:1461px;top:4.3px;width:18px;height:1.200px;background:#b07f67;opacity:.6"></div>
<div class="abs" style="left:1440px;top:6.3px;width:2px;height:1.200px;background:#5d8749;opacity:.6"></div>
<div class="abs" style="left:1443px;top:6.3px;width:11px;height:1.200px;background:#5d8749;opacity:.6"></div>
<div class="abs" style="left:1440px;top:8.3px;width:6px;height:1.200px;background:#a571a1;opacity:.6"></div>
<div class="abs" style="left:1447px;top:8.3px;width:6px;height:1.200px;background:#84b8d6;opacity:.6"></div>
<div class="abs" style="left:1454px;top:8.3px;width:4px;height:1.200px;background:#a571a1;opacity:.6"></div>
<div class="abs" style="left:1459px;top:8.3px;width:10px;height:1.200px;background:#b07f67;opacity:.6"></div>
<div class="abs" style="left:1440px;top:10.3px;width:2px;height:1.200px;background:#5d8749;opacity:.6"></div>
<div class="abs" style="left:1443px;top:10.3px;width:25px;height:1.200px;background:#5d8749;opacity:.6"></div>
<div class="abs" style="left:1440px;top:12.3px;width:6px;height:1.200px;background:#a571a1;opacity:.6"></div>
<div class="abs" style="left:1447px;top:12.3px;width:13px;height:1.200px;background:#b07f67;opacity:.6"></div>
<div class="abs" style="left:1440px;top:16.3px;width:2px;height:1.200px;background:#5d8749;opacity:.6"></div>
<div class="abs" style="left:1443px;top:16.3px;width:34px;height:1.200px;background:#5d8749;opacity:.6"></div>
<div class="abs" style="left:1440px;top:18.3px;width:2px;height:1.200px;background:#5d8749;opacity:.6"></div>
<div class="abs" style="left:1443px;top:18.3px;width:4px;height:1.200px;background:#5d8749;opacity:.6"></div>
<div class="abs" style="left:1448px;top:18.3px;width:8px;height:1.200px;background:#5d8749;opacity:.6"></div>
<div class="abs" style="left:1457px;top:18.3px;width:26px;height:1.200px;background:#5d8749;opacity:.6"></div>
<div class="abs" style="left:1484px;top:18.3px;width:3px;height:1.200px;background:#5d8749;opacity:.6"></div>
<div class="abs" style="left:1488px;top:18.3px;width:6px;height:1.200px;background:#5d8749;opacity:.6"></div>
<div class="abs" style="left:1440px;top:20.3px;width:8px;height:1.200px;background:#84b8d6;opacity:.6"></div>
<div class="abs" style="left:1449px;top:20.3px;width:10px;height:1.200px;background:#b8b88f;opacity:.6"></div>
<div class="abs" style="left:1460px;top:20.3px;width:8px;height:1.200px;background:#84b8d6;opacity:.6"></div>
<div class="abs" style="left:1469px;top:20.3px;width:14px;height:1.200px;background:#b8b88f;opacity:.6"></div>
<div class="abs" style="left:1484px;top:20.3px;width:6px;height:1.200px;background:#b07f67;opacity:.6"></div>
<div class="abs" style="left:1492px;top:20.3px;width:2px;height:1.200px;background:#b0b0b0;opacity:.6"></div>
<div class="abs" style="left:1494px;top:20.3px;width:6px;height:1.200px;background:#b8b88f;opacity:.6"></div>
<div class="abs" style="left:1441px;top:22.3px;width:2px;height:1.200px;background:#5d8749;opacity:.6"></div>
<div class="abs" style="left:1444px;top:22.3px;width:4px;height:1.200px;background:#5d8749;opacity:.6"></div>
<div class="abs" style="left:1449px;top:22.3px;width:16px;height:1.200px;background:#5d8749;opacity:.6"></div>
<div class="abs" style="left:1466px;top:22.3px;width:22px;height:1.200px;background:#5d8749;opacity:.6"></div>
<div class="abs" style="left:1489px;top:22.3px;width:5px;height:1.200px;background:#5d8749;opacity:.6"></div>
<div class="abs" style="left:1495px;top:22.3px;width:45px;height:1.200px;background:#5d8749;opacity:.6"></div>
<div class="abs" style="left:1445px;top:24.3px;width:6px;height:1.200px;background:#43a895;opacity:.6"></div>
<div class="abs" style="left:1452px;top:24.3px;width:3px;height:1.200px;background:#b0b0b0;opacity:.6"></div>
<div class="abs" style="left:1552px;top:0;width:21px;height:392px;background:#424242;border-left:1px solid #585858"></div>
<div class="abs" style="left:1552px;top:392px;width:1px;height:245px;background:#303030"></div>
<div class="abs" style="left:1552px;top:227px;width:21px;height:2px;background:#777"></div>
<div class="abs" style="left:1567px;top:17px;width:6px;height:18px;background:#b89b2a"></div>
<div class="abs" style="left:1559px;top:175px;width:8px;height:17px;background:#9a9a9a"></div>
<div class="abs" style="left:1559px;top:228.500px;width:8px;height:17px;background:#9a9a9a"></div>
</div>

<div id="panel">
<div class="pt" style="left:30px;color:#979797">问题</div>
<div class="abs" style="left:78px;top:13px;width:27px;height:27px;border-radius:14px;background:#4d4d4d;color:#fff;font-size:16.500px;line-height:27px;text-align:center">4</div>
<div class="pt" style="left:137.3px;color:#979797">输出</div>
<div class="pt" style="left:206.70000000000005px;color:#979797">调试控制台</div>
<div class="pt" style="left:325px;color:#e7e7e7">终端</div>
<div class="abs" style="left:322px;top:44.500px;width:39px;height:1.500px;background:#e7e7e7"></div>
<div class="pt" style="left:394px;color:#979797;transform:scaleX(0.838);transform-origin:0 50%">JUPYTER</div>
<div class="pt" style="left:493.29999999999995px;color:#979797;transform:scaleX(0.92);transform-origin:0 50%">COMMENTS</div>
<svg style="left:1441px;top:13px" width="24" height="24" viewBox="0 0 16 16"><path fill="#c5c5c5" d="M14 7v1H8v6H7V8H1V7h6V1h1v6h6z"/></svg>
<svg style="left:1468px;top:17px" width="18" height="18" viewBox="0 0 16 16"><path fill="#c5c5c5" d="M7.976 10.072l4.357-4.357.620.618L8.284 11h-.618L3 6.333l.619-.618 4.357 4.357z"/></svg>
<svg style="left:1499px;top:13px" width="24" height="24" viewBox="0 0 16 16"><path fill="#c5c5c5" d="M8.024 5.928l-4.357 4.357-.620-.618L7.716 5h.618L13 9.667l-.619.618-4.357-4.357z"/></svg>
<svg style="left:1532px;top:13px" width="24" height="24" viewBox="0 0 16 16"><path fill="#c5c5c5" d="M8 8.707l3.646 3.647.708-.707L8.707 8l3.647-3.646-.707-.708L8 7.293 4.354 3.646l-.707.708L7.293 8l-3.646 3.646.707.708L8 8.707z"/></svg>
<div class="abs term" style="left:30px;top:57px;height:28px;line-height:28px"><span style="color:#8b8b8b">15:23:49</span> <span style="color:#29b8db;font-weight:bold">[vite]</span> <span style="color:#1fc17a">page reload</span> <span style="color:#8b8b8b">src/main.tsx</span> <span style="color:#e5e510">(x2)</span></div>
<div class="abs" style="left:1362px;top:58px;width:5px;height:5px;background:#5a5a5a"></div>
<div class="abs" style="left:1376.500px;top:51px;width:1.500px;height:154px;background:#414141"></div>
<div class="abs" style="left:1378px;top:83.500px;width:195px;height:33px;background:#37373d"></div>
<svg style="left:1392px;top:56px" width="26" height="26" viewBox="0 0 16 16"><path fill="#c5c5c5" d="M2.500 1.500h11l1 1v11l-1 1h-11l-1-1v-11zM2.500 2.500v11h11v-11zm3.150 8.150L8.290 8 5.650 5.350l.700-.700 3 3v.700l-3 3z"/></svg>
<div class="abs" style="left:1422.700px;top:51px;height:33px;line-height:36px;font-size:19px;color:#ccc">powershell</div>
<svg style="left:1392px;top:88px" width="26" height="26" viewBox="0 0 16 16" fill="none" stroke="#c5c5c5" stroke-width="1.100"><path d="M2.200 13.800l6.300-6.300M12.500 1.800a3 3 0 0 0-3.900 3.700L2 12.100a1.200 1.200 0 0 0 1.700 1.700l6.600-6.600a3 3 0 0 0 3.700-3.900L12.200 5.100l-1.300-.300-.300-1.300z"/><path d="M2 2.200l1.500-.700 2.200 2.700-.400 1 6.600 6.400 1.700 1.200-.500 1.300-1.300.500-1.200-1.700L4.300 6.400l-1 .400L.700 4.500z" fill="#1e1e1e" stroke="none"/><path d="M4.500 5.500l7 7M1.500 3l1.500-1.500 2.200 2.200-.200 1.300-1.300.200zM11 12l1-1 2.500 2.500a.700.700 0 0 1-1 1z"/></svg>
<div class="abs" style="left:1422.700px;top:84px;height:33px;line-height:36px;font-size:19px;color:#ccc">dev<span style="font-size:17.500px;color:#999;margin-left:9px;letter-spacing:-.900px">Task</span></div>
<svg style="left:1533px;top:94px" width="22" height="22" viewBox="0 0 22 22" fill="none" stroke="#9a9a9a" stroke-width="1.800" stroke-linecap="round"><path d="M2.800 4.500a9.200 9.200 0 0 0 17 8.500"/></svg>
</div>

<div id="status">
<div class="abs" style="left:0;top:0;width:51px;height:33px;background:#16825d"></div>
<svg style="left:14px;top:5px" width="24" height="24" viewBox="0 0 16 16"><path fill="#fff" d="M12.904 9.570L8.928 5.596l3.976-3.976-.619-.620L8 5.286v.619l4.285 4.285.620-.618zM3 5.620l4.072 4.050L3 13.744l.619.618L8 9.979v-.618L3.619 5 3 5.620z"/></svg>
<svg style="left:62px;top:5.500px" width="22" height="22" viewBox="0 0 16 16"><path fill="#fff" d="M8.600 1c1.600.100 3.100.900 4.200 2 1.300 1.400 2 3.100 2 5.100 0 1.600-.600 3.100-1.600 4.400-1 1.200-2.400 2.100-4 2.400-1.600.300-3.200.100-4.600-.700-1.400-.800-2.500-2-3.100-3.500C.900 9.200.800 7.500 1.300 6c.500-1.600 1.400-2.900 2.800-3.800C5.400 1.300 7 .900 8.600 1zm.500 12.900c1.300-.300 2.500-1 3.400-2.100.800-1.100 1.300-2.400 1.200-3.800 0-1.600-.600-3.200-1.700-4.300-1-1-2.200-1.600-3.600-1.700-1.300-.100-2.700.200-3.800 1-1.100.800-1.900 1.900-2.300 3.300-.400 1.300-.400 2.700.200 4 .600 1.300 1.500 2.300 2.700 3 1.200.700 2.600.900 3.900.600zM7.900 7.500L10.300 5l.700.700-2.400 2.500 2.400 2.500-.700.700-2.400-2.500-2.400 2.500-.700-.700 2.400-2.500-2.400-2.500.700-.700 2.400 2.500z"/></svg>
<div class="si" style="left:89px;letter-spacing:0px;">0</div>
<svg style="left:103px;top:5.500px" width="22" height="22" viewBox="0 0 16 16"><path fill="#fff" d="M7.560 1h.880l6.540 12.260-.440.740H1.440L1 13.260 7.560 1zM8 2.280L2.280 13H13.700L8 2.280zM8.625 12v-1h-1.250v1h1.250zm-1.250-2V6h1.250v4h-1.250z"/></svg>
<div class="si" style="left:130px;letter-spacing:0px;">4</div>
<svg style="left:163px;top:5.500px" width="22" height="22" viewBox="0 0 16 16" fill="none" stroke="#fff" stroke-width="1.200"><path d="M12.500 1.800a3 3 0 0 0-3.900 3.700L2 12.100a1.200 1.200 0 0 0 1.700 1.700l6.600-6.600a3 3 0 0 0 3.700-3.900L12.200 5.100l-1.300-.300-.300-1.300z"/><path d="M4.500 5.500l7 7M1.500 3l1.500-1.500 2.200 2.200-.200 1.300-1.300.200zM11 12l1-1 2.500 2.500a.700.700 0 0 1-1 1z"/></svg>
<div class="si" style="left:190.5px;letter-spacing:0px;">1</div>
<div class="si" style="left:792.7px;letter-spacing:-0.2px;">行 14，列 2</div>
<div class="si" style="left:910px;letter-spacing:-0.5px;">空格: 2</div>
<div class="si" style="left:988.3px;letter-spacing:-0.7px;">UTF-8</div>
<div class="si" style="left:1060px;letter-spacing:-2px;">LF</div>
<svg style="left:1098px;top:5.500px" width="22" height="22" viewBox="0 0 16 16"><text x="0" y="11.500" font-family="Liberation Sans,sans-serif" font-size="12.500" fill="#fff">{</text><text x="6.500" y="11.500" font-family="Liberation Sans,sans-serif" font-size="12.500" fill="#fff">}</text><circle cx="11.300" cy="11.800" r="3.400" fill="#fff"/><path d="M9.900 10.400l2.800 2.800M12.700 10.400l-2.800 2.800" stroke="#007acc" stroke-width="1.100"/></svg>
<div class="si" style="left:1128.3px;letter-spacing:-0.5px;">TypeScript React</div>
<svg style="left:1282px;top:5.500px" width="23" height="22" viewBox="0 0 24 24" fill="none" stroke="#fff" stroke-width="2.900"><path d="M7.600 4.700L1.400 11.400l7 6.800 7.300-12.400 6.900 6.700-6.400 6.700"/><path stroke="#007acc" stroke-width=".800" d="M9 12h6.400"/></svg>
<svg style="left:1326.500px;top:5px" width="22" height="23" viewBox="0 0 16 16" fill="none" stroke="#fff" stroke-width="1.200"><circle cx="8" cy="6.500" r="1.700" fill="#fff"/><path d="M8 8v7" stroke-width="1.600"/><path d="M5.200 9.300a4 4 0 1 1 5.600 0M3.600 11.600a6.300 6.300 0 1 1 8.800 0" stroke-linecap="round"/></svg>
<div class="si" style="left:1353.3px;letter-spacing:-0.55px;">Go Live</div>
<svg style="left:1434px;top:4.500px" width="25" height="25" viewBox="0 0 16 16"><path fill="none" stroke="#fff" stroke-width="1.300" stroke-linejoin="round" d="M1.500 4l1-1.500h3.200l1 1.300h5.800l.500.500v7.200l-.500.500H2l-.500-.500z"/><path fill="#fff" stroke="#007acc" stroke-width=".600" d="M7 4.200l1.100 2.300 2.500.300-1.800 1.800.400 2.500L7 9.900l-2.200 1.200.400-2.500-1.800-1.800 2.500-.300z"/><circle cx="11.700" cy="11.600" r="3.600" fill="#fff"/><path d="M11.700 9.300v2.900M11.700 13.100v1" stroke="#007acc" stroke-width="1.100"/></svg>
<svg style="left:1479.500px;top:7px" width="19" height="19" viewBox="0 0 16 16" fill="none" stroke="#fff" stroke-width="1.500" stroke-linejoin="round"><path d="M8 1.500l5.600 3.250v6.500L8 14.500l-5.600-3.250v-6.500z"/><path d="M8 5.200l2.600 1.400v2.800L8 10.800 5.400 9.400V6.600z" stroke-width="1"/><path d="M9.500 1.800L13.600 4.200" stroke="#007acc" stroke-width="2.200"/></svg>
<div class="si" style="left:1502.7px;letter-spacing:0px;">tabnine starter</div>
<svg style="left:1639px;top:5.500px" width="24" height="22" viewBox="0 0 17 16" fill="none" stroke="#fff" stroke-width="1.150"><path d="M1.500 8.200l2.400 3.500M4.800 8.200l3 4.300L15.500 3.400M8.200 8.200L12.200 3.400"/></svg>
<div class="si" style="left:1668.3px;letter-spacing:-0.05px;">Prettier</div>
<div class="si" style="left:1750px;letter-spacing:-0.05px;">Prettier</div>
<svg style="left:1831px;top:5.500px" width="22" height="22" viewBox="0 0 16 16" fill="none" stroke="#fff" stroke-width="1.150"><path d="M7 2.500h7.500v6H12l-1.800 1.800V8.500"/><circle cx="5.800" cy="7" r="2.200"/><path d="M1.500 14.500c.300-2.800 2-4.600 4.300-4.600s4 1.800 4.300 4.600"/></svg>
<svg style="left:1876px;top:4.500px" width="24" height="24" viewBox="0 0 16 16" fill="none" stroke="#fff" stroke-width="1.100"><path d="M9.200 2.200A4.300 4.300 0 0 0 3.800 6.400V9L2.600 12.300h9.800l-.900-2.500"/><path d="M6 12.500a1.600 1.600 0 0 0 3.200 0"/><path d="M1.500 14.500L12 3.500" stroke-width="1"/><circle cx="12" cy="4.300" r="2.700" fill="#fff" stroke="none"/></svg>
</div>

</body>
</html>
